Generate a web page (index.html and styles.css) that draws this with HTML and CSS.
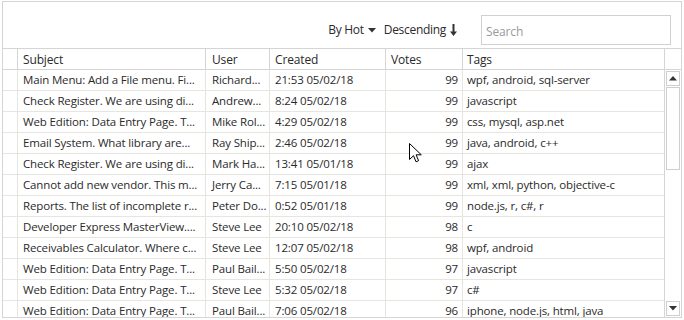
FILE: index.html
```html
<!DOCTYPE html>
<html>
<head>
<meta charset="utf-8">
<link rel="stylesheet" href="styles.css">
</head>
<body>
<div class="grid">
  <div class="toolbar">
    <span class="sort-label">By Hot</span>
    <svg class="caret" width="8" height="5" viewBox="0 0 8 5"><path d="M0 0H8L4 4.5Z" fill="#333"/></svg>
    <span class="sort-label dir">Descending</span>
    <svg class="down-arrow" width="7" height="12" viewBox="0 0 7 12"><path d="M2.5 0H4.5V7.5H7L3.5 12L0 7.5H2.5Z" fill="#333"/></svg>
    <input class="search" type="text" placeholder="Search">
  </div>
  <div class="header">
    <div class="cell ind"></div>
    <div class="cell subject">Subject</div>
    <div class="cell user">User</div>
    <div class="cell created">Created</div>
    <div class="cell votes-h">Votes</div>
    <div class="cell tags">Tags</div>
    <div class="cell corner"></div>
  </div>
  <div class="body">
    <div class="rows">
      <div class="row"><div class="cell ind"></div><div class="cell subject">Main Menu: Add a File menu. Fi...</div><div class="cell user">Richard...</div><div class="cell created">21:53 05/02/18</div><div class="cell votes">99</div><div class="cell tags">wpf, android, sql-server</div></div>
      <div class="row"><div class="cell ind"></div><div class="cell subject">Check Register. We are using di...</div><div class="cell user">Andrew...</div><div class="cell created">8:24 05/02/18</div><div class="cell votes">99</div><div class="cell tags">javascript</div></div>
      <div class="row"><div class="cell ind"></div><div class="cell subject">Web Edition: Data Entry Page. T...</div><div class="cell user">Mike Rol...</div><div class="cell created">4:29 05/02/18</div><div class="cell votes">99</div><div class="cell tags">css, mysql, asp.net</div></div>
      <div class="row"><div class="cell ind"></div><div class="cell subject">Email System. What library are...</div><div class="cell user">Ray Ship...</div><div class="cell created">2:46 05/02/18</div><div class="cell votes">99</div><div class="cell tags">java, android, c++</div></div>
      <div class="row"><div class="cell ind"></div><div class="cell subject">Check Register. We are using di...</div><div class="cell user">Mark Ha...</div><div class="cell created">13:41 05/01/18</div><div class="cell votes">99</div><div class="cell tags">ajax</div></div>
      <div class="row"><div class="cell ind"></div><div class="cell subject">Cannot add new vendor. This m...</div><div class="cell user">Jerry Ca...</div><div class="cell created">7:15 05/01/18</div><div class="cell votes">99</div><div class="cell tags">xml, xml, python, objective-c</div></div>
      <div class="row"><div class="cell ind"></div><div class="cell subject">Reports. The list of incomplete r...</div><div class="cell user">Peter Do...</div><div class="cell created">0:52 05/01/18</div><div class="cell votes">99</div><div class="cell tags">node.js, r, c#, r</div></div>
      <div class="row"><div class="cell ind"></div><div class="cell subject">Developer Express MasterView....</div><div class="cell user">Steve Lee</div><div class="cell created">20:10 05/02/18</div><div class="cell votes">98</div><div class="cell tags">c</div></div>
      <div class="row"><div class="cell ind"></div><div class="cell subject">Receivables Calculator. Where c...</div><div class="cell user">Steve Lee</div><div class="cell created">12:07 05/02/18</div><div class="cell votes">98</div><div class="cell tags">wpf, android</div></div>
      <div class="row"><div class="cell ind"></div><div class="cell subject">Web Edition: Data Entry Page. T...</div><div class="cell user">Paul Bail...</div><div class="cell created">5:50 05/02/18</div><div class="cell votes">97</div><div class="cell tags">javascript</div></div>
      <div class="row"><div class="cell ind"></div><div class="cell subject">Web Edition: Data Entry Page. T...</div><div class="cell user">Steve Lee</div><div class="cell created">5:32 05/02/18</div><div class="cell votes">97</div><div class="cell tags">c#</div></div>
      <div class="row"><div class="cell ind"></div><div class="cell subject">Web Edition: Data Entry Page. T...</div><div class="cell user">Paul Bail...</div><div class="cell created">7:06 05/02/18</div><div class="cell votes">96</div><div class="cell tags">iphone, node.js, html, java</div></div>
    </div>
    <div class="vscroll">
      <div class="sbtn"><svg width="8" height="5" viewBox="0 0 8 5"><path d="M0 4.5H8L4 0Z" fill="#333"/></svg></div>
      <div class="thumb"></div>
      <div class="spacer"></div>
      <div class="sbtn"><svg width="8" height="5" viewBox="0 0 8 5"><path d="M0 0H8L4 4.5Z" fill="#333"/></svg></div>
    </div>
  </div>
  <svg class="cursor" width="13" height="21" viewBox="0 0 13 21"><path d="M0.5 0.5V16.5L4.5 12.7L7 18.8L9.6 17.7L7.1 11.8H12.3Z" fill="#fff" stroke="#000" stroke-width="1" stroke-linejoin="miter"/></svg>
</div>
</body>
</html>
```
FILE: styles.css
```css
html, body {
  margin: 0;
  padding: 0;
  background: #fff;
}
.grid {
  position: relative;
  margin: 1px 0 0 2px;
  width: 680px;
  height: 317px;
  box-sizing: border-box;
  border: 1px solid #d5d5d5;
  display: flex;
  flex-direction: column;
  font-family: "Open Sans", "Noto Sans", sans-serif;
  font-size: 11.5px;
  letter-spacing: -0.15px;
  color: #2a2a2a;
  overflow: hidden;
}
.toolbar {
  height: 46px;
  flex: none;
  box-sizing: border-box;
  padding: 12px 10px 2px 0;
  display: flex;
  align-items: center;
  justify-content: flex-end;
}
.sort-label {
  line-height: 16px;
  font-size: 12px;
  letter-spacing: -0.3px;
}
.caret {
  margin-left: 4px;
}
.dir {
  margin-left: 8px;
}
.down-arrow {
  margin-left: 4px;
}
.search {
  margin-left: 24px;
  width: 190px;
  height: 30px;
  box-sizing: border-box;
  border: 1px solid #d0d0d0;
  padding: 2px 4px 0;
  font-family: inherit;
  font-size: 12px;
  letter-spacing: -0.15px;
  color: #333;
  outline: none;
}
.search::placeholder {
  color: #9a9a9a;
}
.header {
  flex: none;
  display: flex;
  height: 22px;
  box-sizing: border-box;
  border-top: 1px solid #d5d5d5;
  border-bottom: 1px solid #d5d5d5;
}
.cell {
  box-sizing: border-box;
  padding-left: 5px;
  white-space: nowrap;
  overflow: hidden;
  line-height: 20px;
  flex: none;
}
.header .cell {
  border-right: 1px solid #d5d5d5;
  line-height: 21px;
  font-size: 12px;
}
.header .tags {
  border-right: none;
}
.header .corner {
  width: 17px;
  border-left: 1px solid #d5d5d5;
  border-right: none;
}
.ind { width: 15px; padding: 0; }
.subject { width: 188px; }
.user { width: 64px; padding-left: 6px; }
.created { width: 116px; }
.votes-h { width: 77px; }
.votes { width: 77px; text-align: right; padding: 0 4px 0 0; }
.tags { width: 201px; padding-left: 4px; }
.body {
  flex: 1;
  display: flex;
  min-height: 0;
}
.rows {
  flex: 1;
  overflow: hidden;
}
.row {
  display: flex;
  height: 21px;
  box-sizing: border-box;
  border-bottom: 1px solid #e6e6df;
}
.row .cell {
  border-right: 1px solid #e6e6df;
}
.row .tags {
  border-right: none;
}
.vscroll {
  flex: none;
  width: 17px;
  box-sizing: border-box;
  border-left: 1px solid #d5d5d5;
  padding: 1px;
  display: flex;
  flex-direction: column;
}
.sbtn {
  width: 14px;
  height: 15px;
  box-sizing: border-box;
  border: 1px solid #cfcfcf;
  display: flex;
  align-items: center;
  justify-content: center;
  flex: none;
}
.thumb {
  margin-top: 1px;
  width: 14px;
  height: 83px;
  box-sizing: border-box;
  border: 1px solid #cfcfcf;
  flex: none;
}
.spacer {
  flex: 1;
}
.cursor {
  position: absolute;
  left: 406px;
  top: 141px;
}
```
